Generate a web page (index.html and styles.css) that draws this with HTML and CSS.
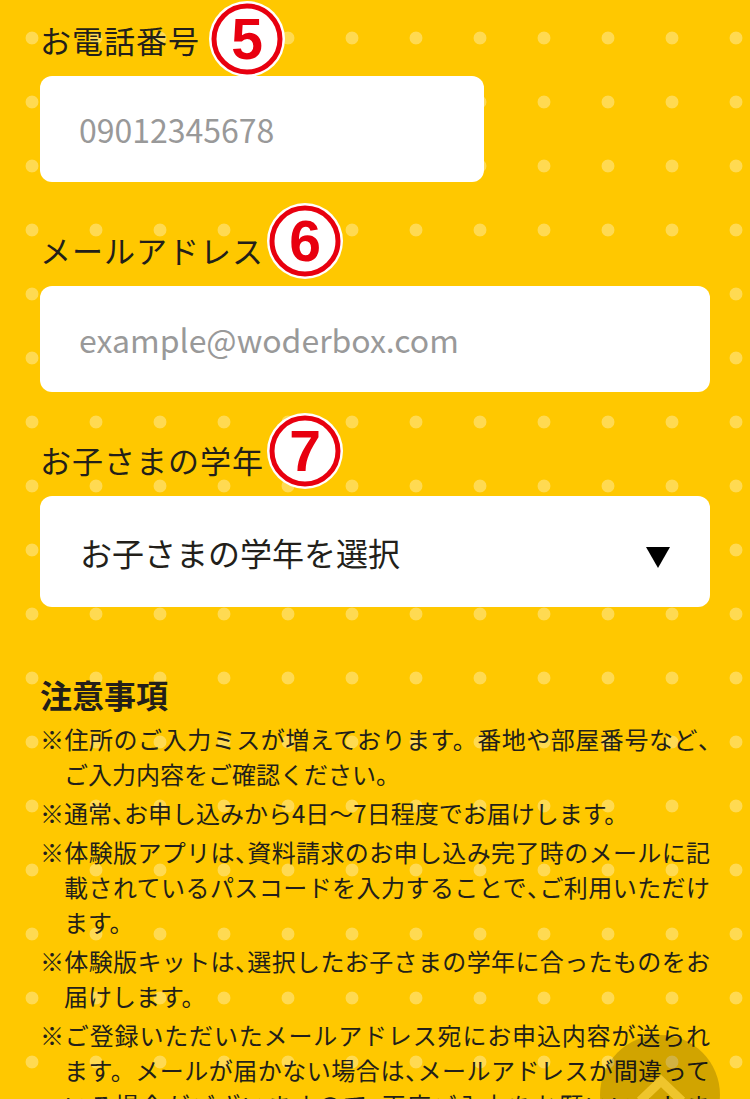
FILE: index.html
```html
<!DOCTYPE html>
<html lang="ja">
<head>
<meta charset="utf-8">
<title>お申し込みフォーム</title>
<link rel="stylesheet" href="styles.css">
</head>
<body>
<main class="form">
  <div class="field field-first">
    <div class="label-row">
      <span class="label">お電話番号</span>
      <svg class="badge" viewBox="0 0 76 76" width="76" height="76" aria-hidden="true">
        <circle cx="38" cy="38" r="38" class="badge-bg"/>
        <circle cx="38" cy="38" r="33" class="badge-ring"/>
        <text x="38" y="58" class="badge-num">5</text>
      </svg>
    </div>
    <input class="input input-short" type="tel" placeholder="09012345678">
  </div>

  <div class="field">
    <div class="label-row">
      <span class="label">メールアドレス</span>
      <svg class="badge" viewBox="0 0 76 76" width="76" height="76" aria-hidden="true">
        <circle cx="38" cy="38" r="38" class="badge-bg"/>
        <circle cx="38" cy="38" r="33" class="badge-ring"/>
        <text x="38" y="58" class="badge-num">6</text>
      </svg>
    </div>
    <input class="input" type="email" placeholder="example@woderbox.com">
  </div>

  <div class="field">
    <div class="label-row">
      <span class="label">お子さまの学年</span>
      <svg class="badge" viewBox="0 0 76 76" width="76" height="76" aria-hidden="true">
        <circle cx="38" cy="38" r="38" class="badge-bg"/>
        <circle cx="38" cy="38" r="33" class="badge-ring"/>
        <text x="38" y="58" class="badge-num">7</text>
      </svg>
    </div>
    <div class="select">
      <span class="select-text">お子さまの学年を選択</span>
      <svg class="select-arrow" viewBox="0 0 24 21" width="24" height="21" aria-hidden="true">
        <polygon points="0,0 24,0 12,21"/>
      </svg>
    </div>
  </div>

  <section class="notes">
    <h2 class="notes-title">注意事項</h2>
    <ul class="notes-list">
      <li>※住所のご入力ミスが増えております。番地や部屋番号など<span class="c">、</span>ご入力内容をご確認ください。</li>
      <li>※通常<span class="c">、</span>お申し込みから4日〜7日程度でお届けします。</li>
      <li>※体験版アプリは<span class="c">、</span>資料請求のお申し込み完了時のメールに記載されているパスコードを入力することで<span class="c">、</span>ご利用いただけます。</li>
      <li>※体験版キットは<span class="c">、</span>選択したお子さまの学年に合ったものをお届けします。</li>
      <li>※ご登録いただいたメールアドレス宛にお申込内容が送られます。メールが届かない場合は<span class="c">、</span>メールアドレスが間違っている場合がございますので<span class="c">、</span>再度ご入力をお願いいたします。</li>
    </ul>
  </section>
</main>

<a class="to-top" href="#" aria-label="ページトップへ">
  <svg class="to-top-icon" viewBox="0 0 120 120" width="120" height="120" aria-hidden="true">
    <polyline points="40,66 61,46 82,66"/>
  </svg>
</a>
</body>
</html>
```

FILE: styles.css
```css
html {
  background-color: #ffc800;
  background-image: radial-gradient(circle at 32px 32px, rgba(255, 255, 255, 0.32) 6px, rgba(255, 255, 255, 0) 6.8px);
  background-size: 64px 64px;
  background-position: 0 6px;
}

body {
  margin: 0;
  font-family: "Noto Sans CJK JP", "Noto Sans", sans-serif;
  color: #231f1a;
}

.form {
  padding: 20px 40px 200px;
}

.field + .field {
  margin-top: 48px;
}

.label-row {
  display: flex;
  align-items: flex-start;
  height: 40px;
  margin-bottom: 16px;
}

.label {
  font-size: 31px;
  letter-spacing: 1px;
  line-height: 40px;
  white-space: nowrap;
}

.badge {
  flex: none;
  margin-top: -27px;
  margin-left: 3px;
  overflow: visible;
}

.field-first .badge {
  margin-top: -19px;
  margin-left: 9px;
}

.badge-bg {
  fill: #ffffff;
}

.badge-ring {
  fill: #ffffff;
  stroke: #e8000f;
  stroke-width: 5;
}

.badge-num {
  font-family: "Liberation Sans", Arial, sans-serif;
  font-weight: 700;
  font-size: 57px;
  text-anchor: middle;
  fill: #e8000f;
  stroke: #ffffff;
  stroke-width: 2;
  paint-order: stroke;
}

.input {
  display: block;
  box-sizing: border-box;
  width: 100%;
  height: 106px;
  margin: 0;
  padding: 0 39px;
  border: none;
  border-radius: 12px;
  background: #ffffff;
  font-family: "Noto Sans CJK JP", "Noto Sans", sans-serif;
  font-size: 32px;
  color: #231f1a;
  outline: none;
}

.input::placeholder {
  color: #999999;
}

.input-short {
  width: 444px;
}

.select {
  display: flex;
  align-items: center;
  justify-content: space-between;
  box-sizing: border-box;
  height: 111px;
  padding: 0 40px 0 40px;
  border-radius: 12px;
  background: #ffffff;
}

.select-text {
  font-size: 32px;
  line-height: 40px;
  color: #231f1a;
}

.select-arrow {
  flex: none;
  margin-top: 11px;
  fill: #000000;
}

.notes {
  margin-top: 64px;
}

.notes-title {
  margin: 0;
  font-size: 32px;
  line-height: 46px;
  font-weight: 700;
}

.notes-list {
  margin: 4px 0 0;
  padding: 0;
  list-style: none;
}

.notes-list li {
  font-size: 24px;
  line-height: 35px;
  padding-left: 24px;
  text-indent: -24px;
  text-align: justify;
}

.notes-list .c {
  font-feature-settings: "halt";
}

.notes-list li + li {
  margin-top: 4px;
}

.to-top {
  position: fixed;
  right: 30px;
  bottom: -56px;
  width: 120px;
  height: 120px;
  border-radius: 50%;
  background: rgba(0, 0, 0, 0.18);
}

.to-top-icon {
  display: block;
}

.to-top-icon polyline {
  fill: none;
  stroke: #efc52c;
  stroke-width: 9;
  stroke-linejoin: miter;
}
```
